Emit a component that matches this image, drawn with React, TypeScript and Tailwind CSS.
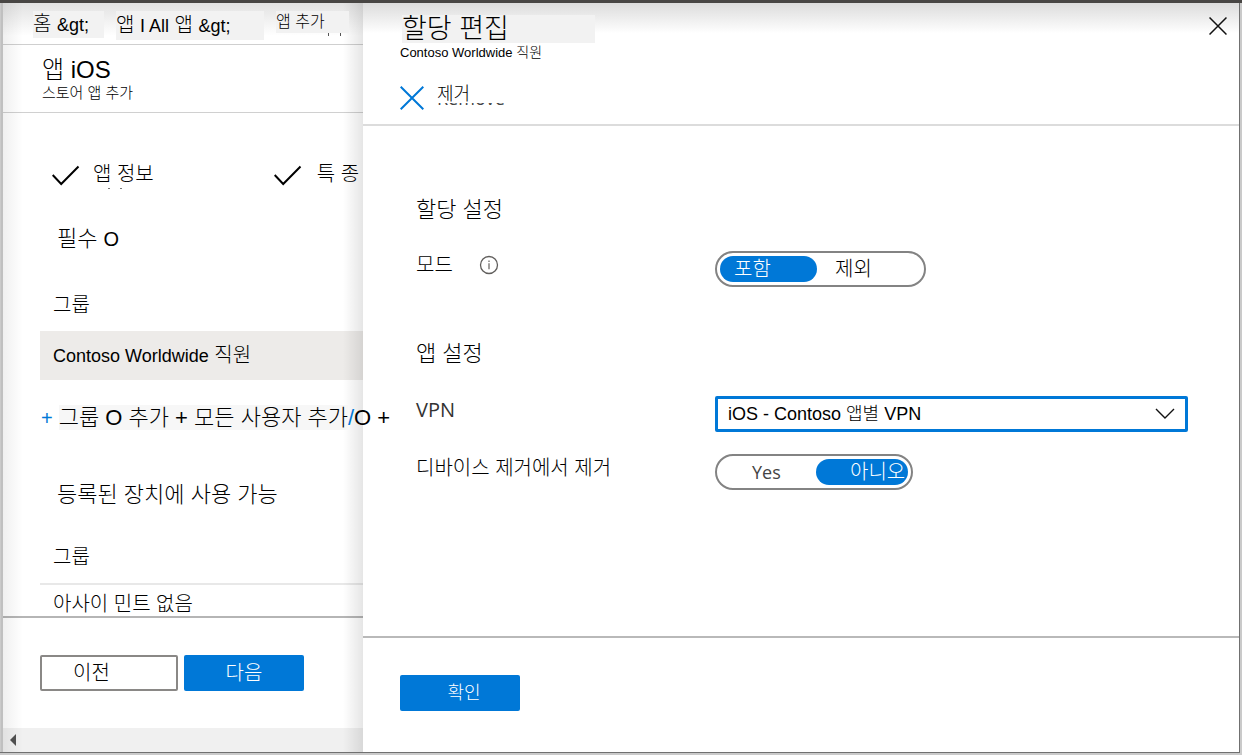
import { ReactNode, useState } from "react";

type Option = { value: string; text: string; className: string };

function CheckIcon() {
  return (
    <svg width="28" height="28" viewBox="0 0 28 28" fill="none" stroke="#000" strokeWidth="2" className="shrink-0">
      <path d="M0.7 15 L9.2 24 L26.5 6.5" />
    </svg>
  );
}

function CrossIcon({ size, color, width }: { size: number; color: string; width: number }) {
  return (
    <svg width={size} height={size} viewBox="0 0 24 24" fill="none" stroke={color} strokeWidth={width} className="shrink-0">
      <path d="M0.7 0.7 L23.3 23.3 M23.3 0.7 L0.7 23.3" />
    </svg>
  );
}

function InfoIcon() {
  return (
    <svg width="20" height="20" viewBox="0 0 20 20" fill="none" stroke="#605e5c" strokeWidth="1.3">
      <circle cx="10" cy="10" r="8.5" />
      <path d="M10 8.3 V14.2 M10 5.4 V7" stroke="#8a8886" strokeWidth="1.6" />
    </svg>
  );
}

function Toggle({ name, title, initial, options }: { name: string; title: string; initial: string; options: Option[] }) {
  const [selected, setSelected] = useState(initial);
  return (
    <div role="radiogroup" aria-label={title} className="flex w-fit rounded-full border-2 border-[#838383] bg-white p-[3px]">
      {options.map((option) => (
        <label
          key={option.value}
          className={`relative cursor-pointer rounded-full leading-[26px] ${option.className} ${
            selected === option.value ? "bg-[#0078d7] text-white" : ""
          }`}
        >
          <input
            type="radio"
            name={name}
            value={option.value}
            checked={selected === option.value}
            onChange={() => setSelected(option.value)}
            className="sr-only"
          />
          {option.text}
        </label>
      ))}
    </div>
  );
}

function Latin({ children }: { children: ReactNode }) {
  return <span className="text-[18px]">{children}</span>;
}

function AppPanel() {
  return (
    <aside className="relative flex w-[362px] shrink-0 flex-col border-l-2 border-[#c0c0c0] bg-white">
      <div className="pointer-events-none absolute inset-y-0 left-0 w-5 bg-linear-to-r from-black/6 to-transparent" />
      <div className="pointer-events-none absolute inset-y-0 right-0 w-5 bg-linear-to-l from-black/10 to-transparent" />

      <nav className="flex items-start gap-3 border-b border-[#cfcfcf] bg-linear-to-b from-[#e2e2e2] to-white to-80% pt-2 pb-1 pl-[30px] text-[20px] leading-[28px]">
        <a href="#home" className="w-[71px] whitespace-nowrap bg-[#f2f2f2] leading-[26px]">
          홈 <Latin>&amp;gt;</Latin>
        </a>
        <a href="#apps" className="w-[148px] whitespace-nowrap bg-[#f2f2f2]">
          앱 <Latin>I All</Latin> 앱 <Latin>&amp;gt;</Latin>
        </a>
        <span className="relative w-[73px] whitespace-nowrap bg-[#f2f2f2] text-[16px] leading-[22px]">
          앱 추가
          <span className="absolute top-full left-[52px] h-[3px] w-[13px] border-x border-[#555]" />
        </span>
      </nav>

      <header className="border-b border-[#d0d0d0] pt-[11px] pb-[10px] pl-[39px]">
        <h1 className="text-[24px] leading-[28px]">앱 iOS</h1>
        <p className="text-[15px] leading-[18px]">스토어 앱 추가</p>
      </header>

      <main className="flex-1">
        <ol className="mt-[47px] flex gap-[120px] whitespace-nowrap pl-[49px] text-[20px] leading-[28px]">
          <li className="flex gap-[13px]">
            <CheckIcon />
            <span className="relative">
              앱 정보
              <span className="absolute top-full left-[15px] h-px w-[14px] border-x-2 border-[#777]" />
            </span>
          </li>
          <li className="flex gap-[15px]">
            <CheckIcon />
            <span>특 종</span>
          </li>
        </ol>

        <h2 className="mt-[37px] pl-[54px] text-[22px] leading-[28px]">
          필수 <span className="text-[20px]">O</span>
        </h2>
        <p className="mt-[38px] pl-[50px] text-[20px] leading-[28px]">그룹</p>
        <div className="mt-3 ml-[37px] bg-[#edebe9] py-[10px] pl-[13px] text-[20px] leading-[28px]">
          <Latin>Contoso Worldwide</Latin> 직원
        </div>
        <div className="relative z-10 mt-6 ml-[38px] flex gap-[6px] whitespace-nowrap text-[22px] leading-[28px]">
          <span className="text-[20px] text-[#0078d7]">+</span>
          <button type="button" className="whitespace-nowrap">
            <span className="bg-[#f7f7f7]">그룹 O 추가 + 모든 사용자 추가</span>
            <span className="text-[#0078d7]">/</span>O +
          </button>
        </div>

        <h2 className="mt-[49px] pl-[54px] text-[22px] leading-[28px]">등록된 장치에 사용 가능</h2>
        <p className="mt-[34px] pl-[50px] text-[20px] leading-[28px]">그룹</p>
        <p className="mt-3 ml-[37px] border-t-2 border-[#e8e8e8] pt-[7px] pl-[13px] text-[20px] leading-[24px]">
          아사이 민트 없음
        </p>
      </main>

      <footer className="flex gap-[6px] border-t-2 border-[#b5b5b5] py-[37px] pl-[37px] text-[20px] leading-[32px]">
        <button type="button" className="w-[138px] rounded-[2px] border-2 border-[#8a8886] pl-[31px] text-left">
          이전
        </button>
        <button type="button" className="w-[120px] rounded-[2px] bg-[#0078d7] text-white">
          다음
        </button>
      </footer>

      <div className="flex h-6 items-center bg-[#f0f0f0] pl-[7px]">
        <svg width="6" height="12" viewBox="0 0 6 12" fill="#505050">
          <path d="M6 0 V12 L0 6 Z" />
        </svg>
      </div>
    </aside>
  );
}

function AssignmentPanel() {
  return (
    <section className="flex min-w-0 flex-1 flex-col bg-white">
      <header className="flex items-start justify-between border-b-2 border-[#dcdcdc] bg-linear-to-b from-[#dcdcdc] to-white to-25% pr-3 pb-[14px] pl-[37px]">
        <div>
          <h1 className="mt-3 ml-[2px] w-[193px] bg-[#f2f2f2] text-[27px] leading-[28px]">할당 편집</h1>
          <p className="text-[14px] leading-[18px]">
            <span className="text-[13px]">Contoso Worldwide</span> 직원
          </p>
          <button type="button" className="mt-6 flex items-center gap-[13px]">
            <CrossIcon size={24} color="#0078d7" width={2} />
            <span className="relative font-['Open_Sans'] text-[18px] leading-[24px] font-normal text-[#444]">
              Remove
              <span className="absolute inset-x-0 -top-2 bg-white pt-[7px] text-left font-['Liberation_Sans','Noto_Sans_CJK_KR',sans-serif] leading-[18px] font-light text-black">
                제거
              </span>
            </span>
          </button>
        </div>
        <button type="button" aria-label="닫기" className="mt-[14px]">
          <CrossIcon size={18} color="#111" width={2} />
        </button>
      </header>

      <div className="flex-1 pr-[51px] pl-[53px] text-[20px] leading-[28px]">
        <h2 className="mt-[70px] text-[22px]">할당 설정</h2>
        <div className="mt-[27px] grid grid-cols-[299px_1fr]">
          <div className="flex items-center gap-[26px] self-start">
            모드
            <InfoIcon />
          </div>
          <Toggle
            name="mode"
            title="모드"
            initial="include"
            options={[
              { value: "include", text: "포함", className: "w-[97px] pl-[14px]" },
              { value: "exclude", text: "제외", className: "w-[104px] pl-[18px]" },
            ]}
          />
        </div>

        <h2 className="mt-[53px] text-[22px]">앱 설정</h2>
        <div className="mt-[28px] grid grid-cols-[299px_1fr]">
          <label htmlFor="vpn" className="font-['Open_Sans'] text-[20px] font-normal text-[#333]">
            VPN
          </label>
          <div className="grid items-center">
            <select
              id="vpn"
              className="col-start-1 row-start-1 h-9 w-full appearance-none rounded-[2px] border-[3px] border-[#0078d7] bg-white pl-[10px] text-[18px]"
            >
              <option>iOS - Contoso 앱별 VPN</option>
            </select>
            <svg
              width="20"
              height="12"
              viewBox="0 0 20 12"
              fill="none"
              stroke="#111"
              strokeWidth="1.4"
              className="pointer-events-none col-start-1 row-start-1 mr-[13px] justify-self-end"
            >
              <path d="M1 1 L10 10 L19 1" />
            </svg>
          </div>
        </div>
        <div className="mt-[22px] grid grid-cols-[299px_1fr]">
          <span>디바이스 제거에서 제거</span>
          <Toggle
            name="uninstall"
            title="디바이스 제거에서 제거"
            initial="no"
            options={[
              { value: "yes", text: "Yes", className: "w-[96px] pl-[32px] font-['Open_Sans'] text-[18px] font-normal text-[#444]" },
              { value: "no", text: "아니오", className: "w-[92px] pl-[34px] whitespace-nowrap" },
            ]}
          />
        </div>
      </div>

      <footer className="border-t-2 border-[#b9b9b9] pt-[37px] pb-[41px] pl-[37px]">
        <button type="button" className="w-[120px] rounded-[2px] bg-[#0078d7] pl-2 text-[18px] leading-[36px] text-white">
          확인
        </button>
      </footer>
    </section>
  );
}

function App() {
  return (
    <div className="flex min-h-screen flex-col bg-[#cacaca] font-['Liberation_Sans','Noto_Sans_CJK_KR',sans-serif] font-light text-black">
      <div className="h-[3px] bg-[#484644]" />
      <div className="mr-[2px] mb-[2px] flex flex-1 border-r border-b border-[#707070] pl-px">
        <AppPanel />
        <AssignmentPanel />
      </div>
    </div>
  );
}

export default App;
